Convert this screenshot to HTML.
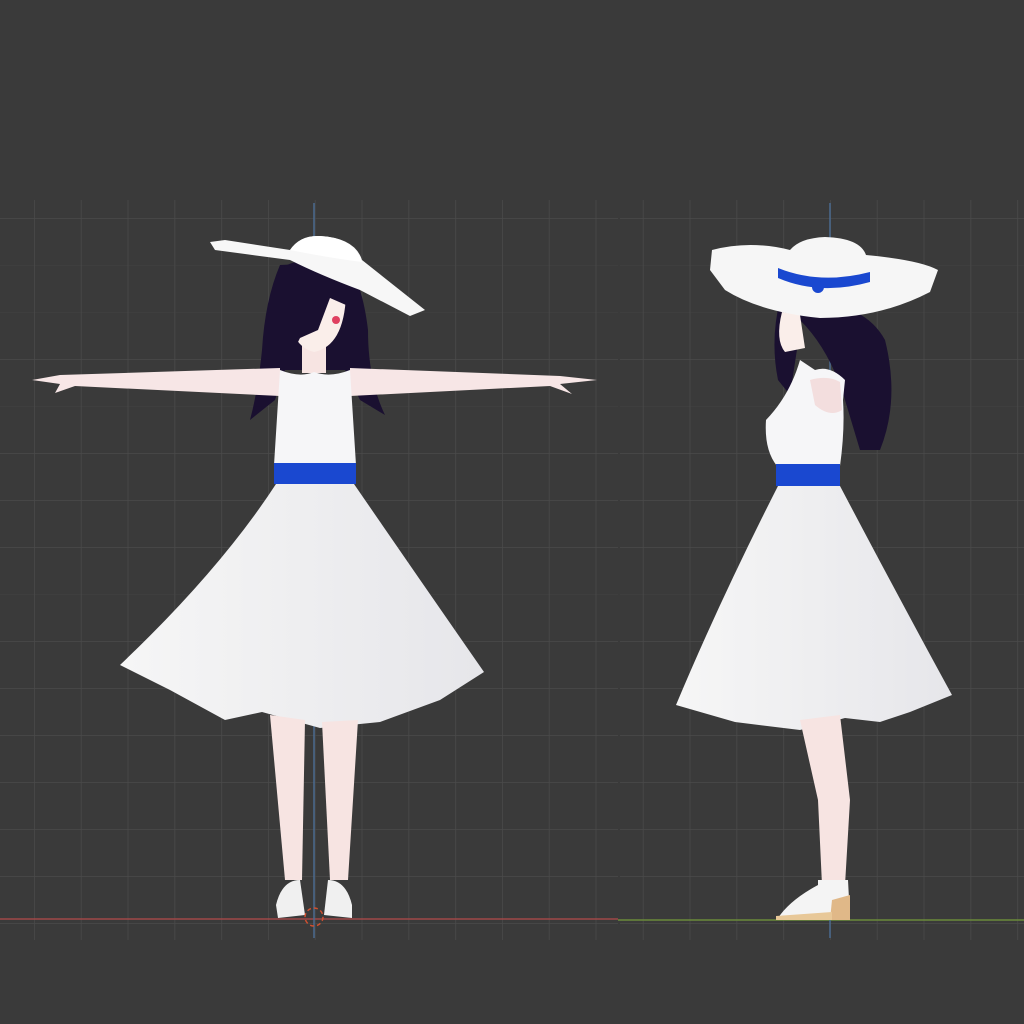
<!DOCTYPE html>
<html><head><style>html,body{margin:0;padding:0;background:#3a3a3a;width:1024px;height:1024px;overflow:hidden}</style></head>
<body>
<svg width="1024" height="1024" viewBox="0 0 1024 1024" xmlns="http://www.w3.org/2000/svg">
<defs>
<pattern id="gl" x="34" y="218" width="46.8" height="47" patternUnits="userSpaceOnUse">
<path d="M0 0V47M0 0H46.8" stroke="#4a4a4a" stroke-width="1.5" fill="none"/></pattern>
<pattern id="gr" x="596" y="218" width="46.8" height="47" patternUnits="userSpaceOnUse">
<path d="M0 0V47M0 0H46.8" stroke="#4a4a4a" stroke-width="1.5" fill="none"/></pattern>
<linearGradient id="sk" x1="0" x2="1"><stop offset="0" stop-color="#f6f6f6"/><stop offset="1" stop-color="#e6e6ea"/></linearGradient>
</defs>
<rect width="1024" height="1024" fill="#3a3a3a"/>
<rect x="0" y="200" width="618" height="740" fill="url(#gl)"/>
<rect x="620" y="200" width="404" height="740" fill="url(#gr)"/>
<line x1="0" y1="919" x2="618" y2="919" stroke="#a04848" stroke-width="1.5"/>
<line x1="618" y1="920" x2="1024" y2="920" stroke="#6a8a3a" stroke-width="1.5"/>
<line x1="314" y1="203" x2="314" y2="938" stroke="#4a6a90" stroke-width="1.5"/>
<line x1="830" y1="203" x2="830" y2="938" stroke="#4a6a90" stroke-width="1.5"/>

<!-- FRONT FIGURE -->
<path d="M280 265 Q265 300 262 350 Q258 390 250 420 L275 400 L285 370 L345 370 L360 400 L385 415 Q368 380 368 330 Q362 280 345 262 Z" fill="#1a1030"/>
<path d="M280 368 L60 375 L32 380 L60 384 L55 393 L75 386 L280 396 Z" fill="#f7e6e6"/>
<path d="M350 368 L560 376 L597 380 L560 384 L572 394 L550 386 L350 396 Z" fill="#f7e6e6"/>
<rect x="302" y="345" width="24" height="28" fill="#f7e4e2"/>
<path d="M288 295 Q286 345 314 352 Q344 346 346 295 Z" fill="#faeeea"/>
<path d="M282 268 Q300 255 340 265 Q350 285 346 305 L330 298 L318 330 L300 338 L294 350 Q282 310 282 268 Z" fill="#1a1030"/>
<circle cx="336" cy="320" r="4" fill="#e04060"/>
<path d="M280 370 Q300 378 314 372 Q330 378 350 370 L356 465 L274 465 Z" fill="#f6f6f8"/>
<rect x="274" y="463" width="82" height="21" fill="#1a48d0"/>
<path d="M276 484 L354 484 Q420 580 484 672 L440 700 L380 722 L320 728 L262 712 L225 720 L170 690 L120 665 Q220 570 276 484 Z" fill="url(#sk)"/>
<path d="M270 715 L305 720 L302 880 L285 880 Z" fill="#f7e4e2"/>
<path d="M322 722 L358 720 L348 880 L330 880 Z" fill="#f7e4e2"/>
<path d="M276 905 Q282 880 300 880 L305 915 L278 918 Z" fill="#f0f0f0"/>
<path d="M324 915 L328 880 Q346 880 352 905 L352 918 Z" fill="#f0f0f0"/>
<circle cx="314" cy="917" r="9" fill="none" stroke="#d05030" stroke-width="1.5" stroke-dasharray="4 3"/>
<path d="M210 242 L225 240 L290 250 Q300 235 320 236 Q355 238 362 260 L425 310 L410 316 L360 290 Q320 275 290 260 L215 250 Z" fill="#f7f7f7"/>
<path d="M290 250 Q300 235 320 236 Q355 238 362 262 Q330 258 290 250Z" fill="#ffffff"/>

<!-- SIDE FIGURE -->
<path d="M780 300 Q770 340 778 380 L790 395 L800 330 Z" fill="#1a1030"/>
<path d="M785 305 Q860 295 885 340 Q900 400 880 450 L860 450 L845 400 Q830 350 800 320 Z" fill="#1a1030"/>
<path d="M782 312 Q775 340 785 352 L805 348 L800 315 Z" fill="#faeeea"/>
<path d="M800 360 Q790 395 766 420 Q764 450 777 466 L840 466 Q845 430 843 400 L845 380 Q830 365 815 370 Z" fill="#f6f6f8"/>
<path d="M810 380 Q828 375 840 382 L842 410 Q830 418 815 405 Z" fill="#f3dede"/>
<rect x="776" y="464" width="64" height="22" fill="#1a48d0"/>
<path d="M778 486 L840 486 Q900 600 952 695 L910 712 L880 722 L845 718 L800 730 L735 722 L676 705 Q720 600 778 486 Z" fill="url(#sk)"/>
<path d="M800 720 L840 715 L850 800 L845 885 L822 885 L818 800 Z" fill="#f7e4e2"/>
<path d="M818 880 L848 880 L850 918 L778 918 Q790 900 818 885 Z" fill="#f4f4f4"/>
<path d="M832 900 L850 895 L850 920 L830 920 Z" fill="#e0b888"/>
<path d="M776 916 L832 912 L832 920 L776 920 Z" fill="#e8c898"/>
<path d="M712 250 Q750 240 790 250 Q800 238 825 237 Q860 238 866 255 Q920 260 938 270 L930 292 Q880 318 820 318 Q760 312 725 290 L710 270 Z" fill="#f6f6f6"/>
<path d="M778 268 Q820 285 870 272 L870 282 Q820 296 778 278 Z" fill="#1a48d0"/>
<circle cx="818" cy="287" r="6" fill="#1a48d0"/>
</svg>
</body></html>
